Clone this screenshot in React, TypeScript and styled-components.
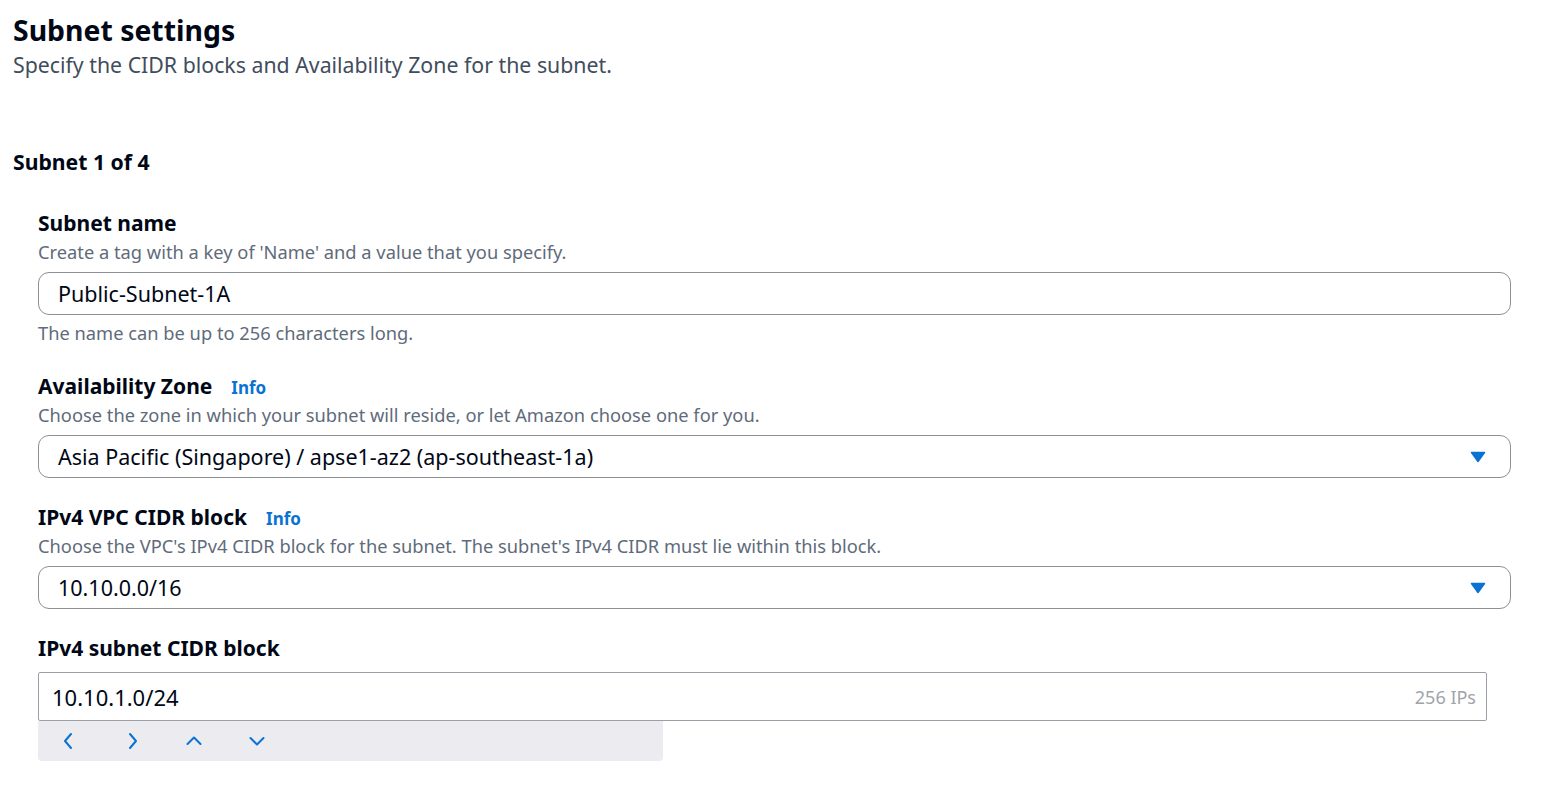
import styled, { createGlobalStyle } from "styled-components";

const GlobalStyle = createGlobalStyle`
  body {
    margin: 0;
    background: #ffffff;
    font-family: "Noto Sans", "Open Sans", sans-serif;
    color: #000716;
  }
`;

const Page = styled.div`
  padding: 12px 37px 28px 13px;
  width: 1548px;
  box-sizing: border-box;
`;

const Title = styled.h1`
  margin: 0;
  font-size: 28.4px;
  line-height: 36px;
  font-weight: 700;
  color: #000716;
`;

const Subtitle = styled.p`
  margin: 0;
  font-size: 21.3px;
  line-height: 34px;
  color: #414d5c;
`;

const SectionTitle = styled.h2`
  margin: 65px 0 0;
  font-size: 21.2px;
  line-height: 30px;
  font-weight: 700;
`;

const Fields = styled.div`
  display: flex;
  flex-direction: column;
  gap: 25px;
  padding: 32px 0 0 25px;
`;

const Field = styled.div`
  display: flex;
  flex-direction: column;
`;

const LabelRow = styled.div`
  display: flex;
  align-items: baseline;
  gap: 19px;
`;

const Label = styled.label`
  font-size: 21px;
  line-height: 28px;
  font-weight: 700;
`;

const InfoLink = styled.a`
  font-size: 17px;
  font-weight: 700;
  color: #0972d3;
  text-decoration: none;
`;

const Description = styled.div`
  font-size: 18.3px;
  line-height: 30px;
  color: #5f6b7a;
`;

const Control = styled.div<{ $square?: boolean; $width?: string }>`
  display: flex;
  align-items: center;
  justify-content: space-between;
  margin-top: ${(p) => (p.$square ? "10px" : "5px")};
  height: ${(p) => (p.$square ? "49px" : "43px")};
  width: ${(p) => p.$width || "100%"};
  box-sizing: border-box;
  border: 1.5px solid ${(p) => (p.$square ? "#9ba0a8" : "#8d9096")};
  border-radius: ${(p) => (p.$square ? "2px" : "11px")};
  padding: ${(p) => (p.$square ? "0 10px 0 13px" : "0 24px 0 19px")};
  font-size: ${(p) => (p.$square ? "22px" : "21.5px")};
  background: #fff;
`;

const Value = styled.span`
  color: #000716;
`;

const Counter = styled.span`
  font-size: 18px;
  color: #a0a4ab;
`;

const Hint = styled.div`
  font-size: 18.3px;
  line-height: 30px;
  color: #5f6b7a;
  margin-top: 3px;
  margin-bottom: -1px;
`;

const StepBar = styled.div`
  display: flex;
  align-items: center;
  width: 625px;
  height: 40px;
  background: #ebebf0;
  border-radius: 0 0 4px 4px;
  padding-left: 18px;
  box-sizing: border-box;
`;

const StepButton = styled.button`
  width: 62.7px;
  height: 40px;
  display: flex;
  align-items: center;
  justify-content: flex-start;
  padding: 0 0 0 4px;
  border: none;
  background: transparent;
  color: #0972d3;
  cursor: pointer;
`;

const Caret = () => (
  <svg width="16" height="12" viewBox="0 0 16 12">
    <path d="M1.5 1.5 L8 10.5 L14.5 1.5 Z" fill="#0972d3" stroke="#0972d3" strokeWidth="1.5" strokeLinejoin="round" />
  </svg>
);

const Chevron = ({ dir }: { dir: "left" | "right" | "up" | "down" }) => {
  const d = {
    left: "M11 2 L5 9 L11 16",
    right: "M7 2 L13 9 L7 16",
    up: "M2.5 12 L9 5.5 L15.5 12",
    down: "M2.5 6 L9 12.5 L15.5 6",
  }[dir];
  return (
    <svg width="18" height="18" viewBox="0 0 18 18">
      <path d={d} fill="none" stroke="#0972d3" strokeWidth="2" strokeLinecap="round" strokeLinejoin="round" />
    </svg>
  );
};

export default function App() {
  return (
    <Page>
      <GlobalStyle />
      <Title>Subnet settings</Title>
      <Subtitle>Specify the CIDR blocks and Availability Zone for the subnet.</Subtitle>

      <SectionTitle>Subnet 1 of 4</SectionTitle>

      <Fields>
        <Field>
          <Label>Subnet name</Label>
          <Description>Create a tag with a key of 'Name' and a value that you specify.</Description>
          <Control>
            <Value>Public-Subnet-1A</Value>
          </Control>
          <Hint>The name can be up to 256 characters long.</Hint>
        </Field>

        <Field>
          <LabelRow>
            <Label>Availability Zone</Label>
            <InfoLink href="#">Info</InfoLink>
          </LabelRow>
          <Description>Choose the zone in which your subnet will reside, or let Amazon choose one for you.</Description>
          <Control>
            <Value>Asia Pacific (Singapore) / apse1-az2 (ap-southeast-1a)</Value>
            <Caret />
          </Control>
        </Field>

        <Field>
          <LabelRow>
            <Label>IPv4 VPC CIDR block</Label>
            <InfoLink href="#">Info</InfoLink>
          </LabelRow>
          <Description>Choose the VPC's IPv4 CIDR block for the subnet. The subnet's IPv4 CIDR must lie within this block.</Description>
          <Control>
            <Value>10.10.0.0/16</Value>
            <Caret />
          </Control>
        </Field>

        <Field>
          <Label>IPv4 subnet CIDR block</Label>
          <Control $square $width="1449px">
            <Value>10.10.1.0/24</Value>
            <Counter>256 IPs</Counter>
          </Control>
          <StepBar>
            <StepButton><Chevron dir="left" /></StepButton>
            <StepButton><Chevron dir="right" /></StepButton>
            <StepButton><Chevron dir="up" /></StepButton>
            <StepButton><Chevron dir="down" /></StepButton>
          </StepBar>
        </Field>
      </Fields>
    </Page>
  );
}
